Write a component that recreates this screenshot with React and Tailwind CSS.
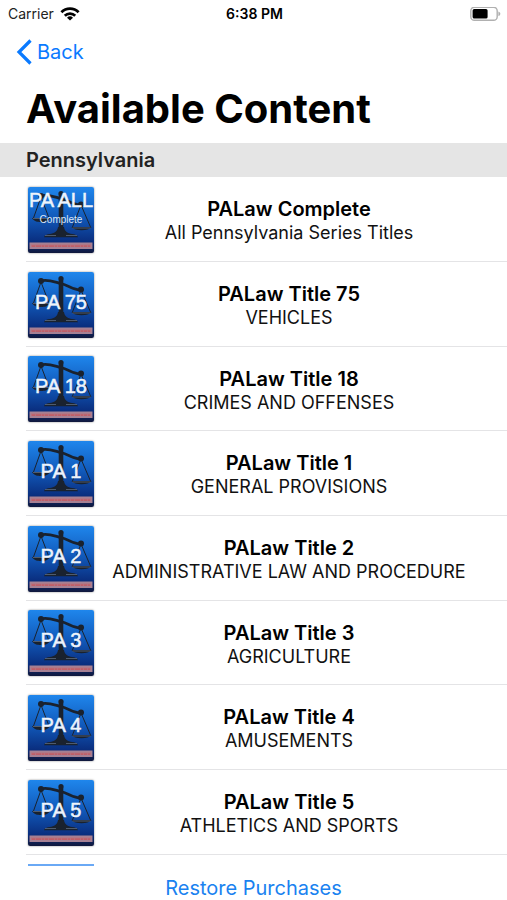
const titles = [
  { code: "PA ALL", note: "Complete", name: "PALaw Complete", desc: "All Pennsylvania Series Titles" },
  { code: "PA 75", name: "PALaw Title 75", desc: "VEHICLES" },
  { code: "PA 18", name: "PALaw Title 18", desc: "CRIMES AND OFFENSES" },
  { code: "PA 1", name: "PALaw Title 1", desc: "GENERAL PROVISIONS" },
  { code: "PA 2", name: "PALaw Title 2", desc: "ADMINISTRATIVE LAW AND PROCEDURE" },
  { code: "PA 3", name: "PALaw Title 3", desc: "AGRICULTURE" },
  { code: "PA 4", name: "PALaw Title 4", desc: "AMUSEMENTS" },
  { code: "PA 5", name: "PALaw Title 5", desc: "ATHLETICS AND SPORTS" },
];

function WifiIcon() {
  return (
    <svg viewBox="0 0 20 14" className="h-[14px] w-5" fill="none" stroke="#000" strokeWidth="2.8" aria-hidden="true">
      <path d="M1.4 5.2a12.200 12.200 0 0 1 17.200 0" />
      <path d="M4.800 8.700a7.400 7.400 0 0 1 10.400 0" />
      <path d="M10 13.600 7 10.700a4.300 4.300 0 0 1 6 0z" fill="#000" stroke="none" />
    </svg>
  );
}

function BatteryIcon() {
  return (
    <svg viewBox="0 0 31 15" className="h-[15px] w-[31px]" aria-hidden="true">
      <rect x="0.8" y="0.3" width="26.4" height="13" rx="3.6" fill="#fff" stroke="#b0b0b0" strokeWidth="1.4" />
      <rect x="2.6" y="2.1" width="15" height="9.4" rx="1.6" fill="#000" />
      <path d="M28.4 4.500v4.600c1.200-.4 1.900-1.300 1.900-2.300s-.7-1.900-1.900-2.300z" fill="#b0b0b0" />
    </svg>
  );
}

// book cover: scales of justice on blue, with the series strip at the bottom
function Cover({ code, note }) {
  return (
    <svg viewBox="0 0 66 66" className="size-[66px] shrink-0 rounded-[2px] shadow-[0_0_2px_rgba(0,0,0,0.5)]" aria-hidden="true">
      <defs>
        <linearGradient id="cover" x1="0" y1="0" x2="0" y2="1">
          <stop offset="0" stopColor="#1f86ec" />
          <stop offset="0.45" stopColor="#115abb" />
          <stop offset="0.82" stopColor="#0a2f80" />
          <stop offset="1" stopColor="#10183c" />
        </linearGradient>
      </defs>
      <rect width="66" height="66" fill="url(#cover)" />
      <g stroke="#1a222e" fill="none" strokeLinecap="round">
        <path d="M13 9c6-2 12 .5 20 2.500s12 6.500 20 6.500" strokeWidth="2.800" />
        <path d="M13 10 5.500 31M13 10l8 21M53 18l-8.500 22M53 18l9.500 22" strokeWidth="1" />
        <path d="M33 8v38" strokeWidth="4.600" />
      </g>
      <g fill="#1a222e">
        <circle cx="33" cy="6.500" r="2.600" />
        <circle cx="13" cy="9" r="3" />
        <circle cx="53" cy="17.500" r="3" />
        <path d="M4 31h18c-2 3.500-5 4-9 4s-7-.5-9-4z" />
        <path d="M43.500 40h20c-2 2.500-5 3.200-10 3.200s-8-.7-10-3.200z" />
        <path d="M30 40h6c.5 4.500 4 6.500 8 7 3 .4 5.500 1 6 3.200H16c.5-2.200 3-2.800 6-3.200 4-.5 7.500-2.500 8-7z" />
      </g>
      <path d="M17 48.500h11M38 48.500h11M44.500 41h18M5 31.500h16" stroke="#5d6a7e" strokeWidth="0.8" />
      <rect x="1.500" y="55.500" width="63" height="6.500" fill="#a58093" />
      <path d="M3 58.800h60" stroke="#b8707c" strokeWidth="2.600" />
      <path d="M4 59.200h58" stroke="#c05a62" strokeWidth="1.200" strokeDasharray="3 1 5 1 2 1" />
      <text
        x="33"
        y={note ? 20 : 37}
        textAnchor="middle"
        fill="#eef4fb"
        stroke="#eef4fb"
        strokeWidth="0.5"
        fontFamily="Liberation Sans, sans-serif"
        fontSize="20"
      >
        {code}
      </text>
      {note && (
        <text x="33" y="36" textAnchor="middle" fill="#dbe7f6" fontFamily="Liberation Sans, sans-serif" fontSize="10">
          {note}
        </text>
      )}
    </svg>
  );
}

function StatusBar() {
  return (
    <div className="grid h-7 grid-cols-3 items-center pl-2 pr-[6px] text-sm">
      <div className="flex items-center gap-[6px] text-[#222]">
        <span>Carrier</span>
        <WifiIcon />
      </div>
      <span className="text-center font-semibold">6:38 PM</span>
      <div className="flex justify-end">
        <BatteryIcon />
      </div>
    </div>
  );
}

export default function App() {
  return (
    <div className="flex h-screen flex-col bg-white font-['Inter',sans-serif] text-black">
      <StatusBar />

      <nav className="flex h-12 items-center px-4">
        <button className="flex items-center gap-[5px] text-xl text-[#0a7aff]">
          <svg viewBox="0 0 16 26" className="h-[26px] w-4" fill="none" stroke="currentColor" strokeWidth="3.200" aria-hidden="true">
            <path d="M14.500 1.500 3 13l11.500 11.500" />
          </svg>
          Back
        </button>
      </nav>

      <h1 className="h-[67px] px-[26px] pt-[9px] text-[40px] leading-[48px] font-bold">Available Content</h1>

      <h2 className="flex h-[34px] shrink-0 items-center bg-[#e5e5e5] px-[26px] text-xl font-semibold text-[#222]">
        Pennsylvania
      </h2>

      <ul className="min-h-0 flex-1 overflow-y-auto [scrollbar-width:none]">
        {titles.map((t) => (
          <li
            key={t.code}
            className="ml-[26px] flex h-[85px] items-center border-b border-[#e4e4e6] pt-px pl-[2px] pr-[23px] nth-[3n]:h-[84px]"
          >
            <Cover code={t.code} note={t.note} />
            <div className="flex-1 pt-[3px] text-center">
              <div className="text-xl leading-6 font-semibold">{t.name}</div>
              <div className="text-lg leading-6 whitespace-nowrap text-[#111]">{t.desc}</div>
            </div>
          </li>
        ))}
        {/* top edge of the next cover */}
        <li className="ml-7 h-[11px] pt-[9px]">
          <div className="h-[2px] w-[66px] bg-[#6aa9f5]" />
        </li>
      </ul>

      <footer className="flex h-[34px] shrink-0 items-center justify-center pt-[10px]">
        <button className="text-xl text-[#1a82f0]">Restore Purchases</button>
      </footer>
    </div>
  );
}
